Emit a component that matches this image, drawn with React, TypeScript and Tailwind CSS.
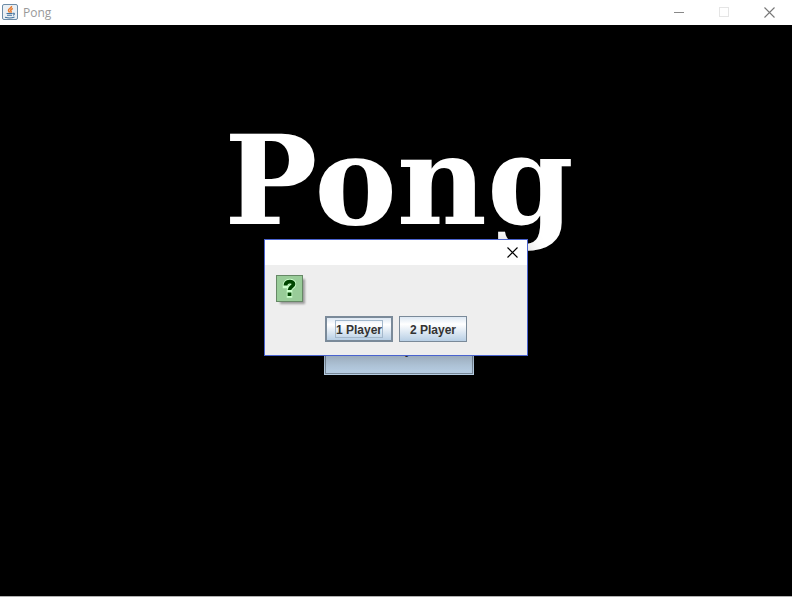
import React from "react";

function JavaIcon() {
  return (
    <svg width="16" height="16" viewBox="0 0 16 16" aria-hidden="true">
      <rect x="0.5" y="0.5" width="15" height="15" rx="1.5" fill="#e9eff4" stroke="#6c8ba6" />
      <path d="M9.5 2c.8 1.600-3 2.600-3 4.200 0 .9.800 1.500 1.200 2.300M10.800 4.500c-1.800.7-2.600 1.500-1.800 2.500.5.700.2 1.200-.4 1.700" fill="none" stroke="#e8792b" strokeWidth="1.500" />
      <path d="M4.500 9.500h6M5 11.300h5M3 13.300c2.500.8 7 .8 9.500-.2M10.800 9.300c1.800-.5 2.200 1.200.2 2" fill="none" stroke="#41719c" strokeWidth="1.100" />
    </svg>
  );
}

function CloseIcon() {
  return (
    <svg width="11" height="11" viewBox="0 0 11 11" aria-hidden="true">
      <path d="M0.500 0.500l10 10M10.500 0.500l-10 10" stroke="currentColor" strokeWidth="1.100" fill="none" />
    </svg>
  );
}

function QuestionIcon() {
  return (
    <svg width="31" height="31" viewBox="0 0 31 31" aria-hidden="true">
      <defs>
        <filter id="soft" x="-20%" y="-20%" width="140%" height="140%">
          <feGaussianBlur stdDeviation="1" />
        </filter>
      </defs>
      <rect x="4" y="4" width="25" height="25" fill="#000" opacity="0.350" filter="url(#soft)" />
      <rect x="0.500" y="0.500" width="26" height="26" fill="#99cc99" stroke="#668866" />
      <path d="M9.500 10.500c0-5 8-5 8-1.500 0 3-4 2.500-4 6M13.500 18v2" fill="none" stroke="#ccffcc" strokeWidth="5.500" strokeLinecap="square" />
      <path d="M9.500 10.500c0-5 8-5 8-1.500 0 3-4 2.500-4 6M13.500 17.500v3.500" fill="none" stroke="#004400" strokeWidth="3.800" />
    </svg>
  );
}

export default function App() {
  return (
    <div className="flex h-screen flex-col border-b border-[#b0b0b0] bg-black font-['Liberation_Sans',Arial,sans-serif]">
      <header className="flex h-[25px] shrink-0 items-center bg-white pl-0.5 text-[#999999]">
        <span className="pb-px">
          <JavaIcon />
        </span>
        <h1 className="ml-[5px] flex-1 font-['Open_Sans',sans-serif] text-xs">Pong</h1>
        <button aria-label="Minimize" className="flex h-full w-[45px] items-center justify-center">
          <span className="h-px w-2.5 bg-[#888888]" />
        </button>
        <button aria-label="Maximize" disabled className="flex h-full w-[46px] items-center justify-center pb-px">
          <span className="size-2.5 border border-[#e5e5e5]" />
        </button>
        <button aria-label="Close" className="flex h-full w-[45px] items-center justify-center pb-px text-[#777777]">
          <CloseIcon />
        </button>
      </header>

      <main className="flex flex-1 flex-col items-center pl-1.5">
        <h2 className="mt-[86px] h-[214px] font-['DejaVu_Serif',serif] text-[124px] leading-[140px] font-bold text-white">
          Pong
        </h2>
        <button className="h-[50px] w-[150px] border-2 border-[#7a8a99] bg-linear-to-b from-[#c0d0e0] to-[#b8cfe5] text-xs font-bold text-[#333333] outline outline-[#b8cfe5] -outline-offset-1">
          Play
        </button>
      </main>

      <div className="fixed inset-0 flex items-center justify-center pb-0.5">
        <section role="dialog" aria-label="Players" className="w-[264px] border border-[#4a63cf] bg-[#eeeeee] shadow-[0_4px_16px_rgba(0,0,0,0.25)]">
          <div className="flex h-[25px] items-center justify-end bg-white pr-[9px] pb-px text-black">
            <button aria-label="Close dialog">
              <CloseIcon />
            </button>
          </div>
          <div className="px-[11px] pt-2.5 pb-[13px]">
            <QuestionIcon />
            <div className="mt-2.5 flex justify-center gap-1.5 text-xs font-bold text-[#333333]">
              <button className="flex h-[26px] w-[68px] items-center justify-center border-2 border-[#7a8a99] bg-linear-to-b from-[#dde8f3] via-white via-30% to-[#b8cfe5]">
                <span className="border border-[#a3b8cc] pt-0.5 leading-[14px] whitespace-nowrap">1 Player</span>
              </button>
              <button className="h-[26px] w-[68px] border border-[#7a8a99] bg-linear-to-b from-[#dde8f3] via-white via-30% to-[#b8cfe5] pt-px whitespace-nowrap">
                2 Player
              </button>
            </div>
          </div>
        </section>
      </div>
    </div>
  );
}
